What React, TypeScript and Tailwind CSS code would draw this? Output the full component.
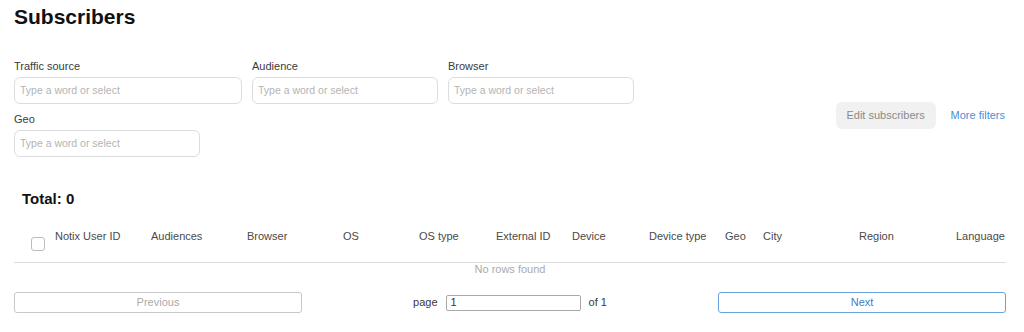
import React from "react";

const font = { fontFamily: '"Liberation Sans", Arial, sans-serif' };

function Filter({ label, width }: { label: string; width: string }) {
  return (
    <div className={`flex flex-col ${width}`}>
      <div className="h-[13px] text-[11px] leading-[13px] text-[#3a3a3a]">{label}</div>
      <div className="mt-[4px] h-[27px] rounded-[6px] border border-[#dcdcdc] bg-white flex items-center px-[5px]">
        <span className="text-[10.5px] leading-[13px] text-[#b4b4b4]">Type a word or select</span>
      </div>
    </div>
  );
}

const cols: { name: string; w: string }[] = [
  { name: "Notix User ID", w: "w-[96px]" },
  { name: "Audiences", w: "w-[96px]" },
  { name: "Browser", w: "w-[96px]" },
  { name: "OS", w: "w-[76px]" },
  { name: "OS type", w: "w-[77px]" },
  { name: "External ID", w: "w-[76px]" },
  { name: "Device", w: "w-[77px]" },
  { name: "Device type", w: "w-[76px]" },
  { name: "Geo", w: "w-[38px]" },
  { name: "City", w: "w-[96px]" },
  { name: "Region", w: "w-[97px]" },
  { name: "Language", w: "flex-1" },
];

export default function App() {
  return (
    <div className="w-[1024px] h-[332px] bg-white overflow-hidden" style={font}>
      <div className="ml-[14px] w-[992px]">
        <h1 className="mt-[5px] text-[21px] leading-[24px] font-bold text-[#111]">Subscribers</h1>

        <div className="mt-[31px] flex items-start">
          <div className="flex flex-wrap w-[640px] gap-x-[10px] gap-y-[9px]">
            <Filter label="Traffic source" width="w-[228px]" />
            <Filter label="Audience" width="w-[186px]" />
            <Filter label="Browser" width="w-[186px]" />
            <Filter label="Geo" width="w-[186px]" />
          </div>
          <div className="ml-auto mt-[42px] flex items-center">
            <div className="w-[100px] h-[27px] rounded-[6px] bg-[#f1f1f1] flex items-center justify-center text-[11px] text-[#8a8a8a]">
              Edit subscribers
            </div>
            <div className="ml-[15px] mr-[1px] text-[11px] text-[#4a8fd8]">More filters</div>
          </div>
        </div>

        <div className="mt-[33px] ml-[8px] text-[15px] leading-[18px] font-bold text-[#111]">Total: 0</div>

        <div className="mt-[20px] flex h-[35px] border-b border-[#dcdcdc]">
          <div className="w-[41px] pl-[17px] pt-[9px]">
            <div className="w-[14px] h-[14px] rounded-[3px] border border-[#bdbdbd] bg-white" />
          </div>
          {cols.map((c) => (
            <div key={c.name} className={`${c.w} pt-[2px] text-[11px] leading-[13px] text-[#4a4a4a] whitespace-nowrap`}>
              {c.name}
            </div>
          ))}
        </div>
        <div className="text-center text-[11px] leading-[13px] text-[#aaa]">No rows found</div>

        <div className="mt-[16px] flex items-center">
          <div className="w-[288px] h-[21px] rounded-[3px] border border-[#c8c8c8] flex items-center justify-center text-[11px] text-[#aaa]">
            Previous
          </div>
          <div className="flex-1 flex items-center justify-center text-[11px] text-[#3a3a3a]">
            <span>page</span>
            <div className="ml-[8px] w-[135px] h-[16px] border border-[#a9a9a9] rounded-[2px] flex items-center pl-[4px] text-[11px] text-[#333]">
              1
            </div>
            <span className="ml-[8px]">of 1</span>
          </div>
          <div className="w-[288px] h-[21px] rounded-[3px] border border-[#6aa3dc] flex items-center justify-center text-[11px] text-[#3b7dc8]">
            Next
          </div>
        </div>
      </div>
    </div>
  );
}
